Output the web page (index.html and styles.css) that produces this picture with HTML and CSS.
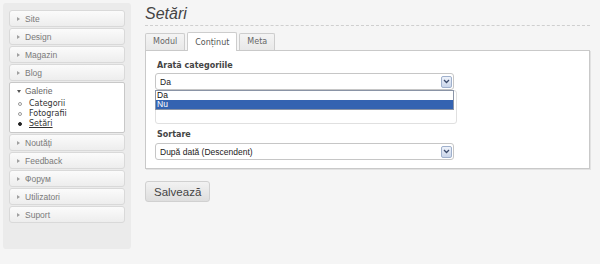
FILE: index.html
```html
<!DOCTYPE html>
<html lang="ro">
<head>
<meta charset="utf-8">
<title>Setări</title>
<link rel="stylesheet" href="styles.css">
</head>
<body>
<aside class="sidebar">
  <div class="nav-item"><span class="tri"></span>Site</div>
  <div class="nav-item"><span class="tri"></span>Design</div>
  <div class="nav-item"><span class="tri"></span>Magazin</div>
  <div class="nav-item"><span class="tri"></span>Blog</div>
  <div class="nav-open">
    <div class="nav-open-head"><span class="tri-down"></span>Galerie</div>
    <ul class="sub">
      <li><span class="bullet"></span>Categorii</li>
      <li><span class="bullet"></span>Fotografii</li>
      <li class="current"><span class="bullet filled"></span><u>Setări</u></li>
    </ul>
  </div>
  <div class="nav-item"><span class="tri"></span>Noutăți</div>
  <div class="nav-item"><span class="tri"></span>Feedback</div>
  <div class="nav-item"><span class="tri"></span>Форум</div>
  <div class="nav-item"><span class="tri"></span>Utilizatori</div>
  <div class="nav-item"><span class="tri"></span>Suport</div>
</aside>
<main class="main">
  <h1 class="title">Setări</h1>
  <div class="tabs">
    <div class="tab">Modul</div>
    <div class="tab active">Conținut</div>
    <div class="tab">Meta</div>
  </div>
  <div class="panel">
    <div class="label">Arată categoriile</div>
    <div class="select">
      <span>Da</span>
      <span class="sel-btn"><svg width="7" height="5" viewBox="0 0 7 5"><path d="M1 1 L3.5 3.5 L6 1" fill="none" stroke="#3a4a6a" stroke-width="1.3"/></svg></span>
    </div>
    <div class="listwrap">
      <div class="dropdown">
        <div class="opt">Da</div>
        <div class="opt sel">Nu</div>
      </div>
    </div>
    <div class="label label2">Sortare</div>
    <div class="select">
      <span>După dată (Descendent)</span>
      <span class="sel-btn"><svg width="7" height="5" viewBox="0 0 7 5"><path d="M1 1 L3.5 3.5 L6 1" fill="none" stroke="#3a4a6a" stroke-width="1.3"/></svg></span>
    </div>
  </div>
  <button class="save">Salvează</button>
</main>
</body>
</html>
```
FILE: styles.css
```css
html, body { margin: 0; padding: 0; }
body {
  background: #f5f5f5;
  display: flex;
  align-items: flex-start;
  padding: 3px;
  gap: 14px;
  width: 600px;
  height: 264px;
  box-sizing: border-box;
  overflow: hidden;
  font-family: "DejaVu Sans", sans-serif;
}
.sidebar {
  width: 128px;
  height: 246px;
  box-sizing: border-box;
  padding: 7px 6px;
  background: #ebebeb;
  border-radius: 3px;
}
.nav-item {
  height: 17px;
  box-sizing: border-box;
  border: 1px solid #d9d9d9;
  border-radius: 3px;
  background: linear-gradient(#fbfbfb, #ededed);
  margin-bottom: 1px;
  display: flex;
  align-items: center;
  padding-left: 7px;
  font: 8.5px "Liberation Sans", sans-serif;
  color: #7a7a7a;
}
.tri {
  width: 0; height: 0;
  border-left: 3px solid #a0a0a0;
  border-top: 2.5px solid transparent;
  border-bottom: 2.5px solid transparent;
  margin-right: 5px;
}
.nav-open {
  height: 51px;
  box-sizing: border-box;
  background: #fff;
  border: 1px solid #c8c8c8;
  border-radius: 2px;
  margin-bottom: 1px;
  padding: 3px 0 0 7px;
}
.nav-open-head {
  height: 10px;
  display: flex;
  align-items: center;
  font: 8.5px "Liberation Sans", sans-serif;
  color: #666;
}
.tri-down {
  width: 0; height: 0;
  border-top: 3px solid #555;
  border-left: 2.5px solid transparent;
  border-right: 2.5px solid transparent;
  margin-right: 4px;
}
.sub {
  list-style: none;
  margin: 3px 0 0 0;
  padding: 0;
}
.sub li {
  height: 10px;
  line-height: 10px;
  display: flex;
  align-items: center;
  font-size: 8px;
  color: #333;
}
.bullet {
  width: 2px; height: 2px;
  border: 1px solid #999;
  border-radius: 50%;
  margin: 0 7px 0 1px;
}
.bullet.filled { background: #222; border-color: #222; }
.current { color: #111; }
.main {
  flex: 1;
  margin-right: 7px;
}
.title {
  margin: 0;
  height: 22px;
  font: italic normal 16px/22px "Liberation Sans", sans-serif;
  color: #444;
  border-bottom: 1px dashed #cfcfcf;
}
.tabs {
  display: flex;
  align-items: flex-end;
  gap: 2px;
  margin-top: 6px;
  margin-bottom: -1px;
  position: relative;
  z-index: 1;
}
.tab {
  height: 17px;
  box-sizing: border-box;
  padding: 0 7px;
  line-height: 16px;
  font-size: 8px;
  color: #666;
  background: linear-gradient(#f4f4f4, #e8e8e8);
  border: 1px solid #cdcdcd;
  border-bottom: none;
  border-radius: 2px 2px 0 0;
  margin-bottom: 1px;
}
.tab.active {
  height: 19px;
  background: #fff;
  line-height: 19px;
  margin-bottom: 0;
  color: #555;
}
.panel {
  background: #fff;
  border: 1px solid #c9c9c9;
  box-shadow: 1px 1px 0 #e2e2e2;
  padding: 9px 9px 9px 9px;
  height: 119px;
  box-sizing: border-box;
}
.label {
  font: bold 8px/12px "DejaVu Sans", sans-serif;
  color: #444;
  padding-left: 2px;
  margin-bottom: 1px;
}
.label2 { margin-top: 5px; margin-bottom: 2px; }
.select {
  width: 299px;
  height: 17px;
  box-sizing: border-box;
  border: 1px solid #c6c6c6;
  border-radius: 3px;
  background: #fff;
  display: flex;
  align-items: center;
  padding-left: 4px;
  font: 8.5px "Liberation Sans", sans-serif;
  color: #222;
}
.sel-btn {
  margin-left: auto;
  margin-right: 1px;
  width: 11px;
  height: 12px;
  box-sizing: border-box;
  border: 1px solid #9fb0cc;
  border-radius: 2px;
  background: linear-gradient(#eef2fa, #c9d5ea);
  display: flex;
  align-items: center;
  justify-content: center;
}
.listwrap {
  position: relative;
  width: 302px;
  height: 34px;
  box-sizing: border-box;
  border: 1px solid #e0e0e0;
  border-radius: 3px;
}
.dropdown {
  position: absolute;
  top: -1px;
  left: -1px;
  width: 299px;
  box-sizing: border-box;
  border: 1px solid #8a94a6;
  background: #fff;
}
.opt {
  height: 9px;
  padding-left: 1px;
  font: 8.5px/9px "Liberation Sans", sans-serif;
  color: #111;
}
.opt.sel {
  background: #3463b1;
  color: #fff;
}
.save {
  margin-top: 12px;
  height: 21px;
  padding: 0 8px;
  border: 1px solid #d0d0d0;
  border-radius: 3px;
  background: linear-gradient(#f2f2f2, #dedede);
  font: 11.5px "Liberation Sans", sans-serif;
  color: #444;
}
```
